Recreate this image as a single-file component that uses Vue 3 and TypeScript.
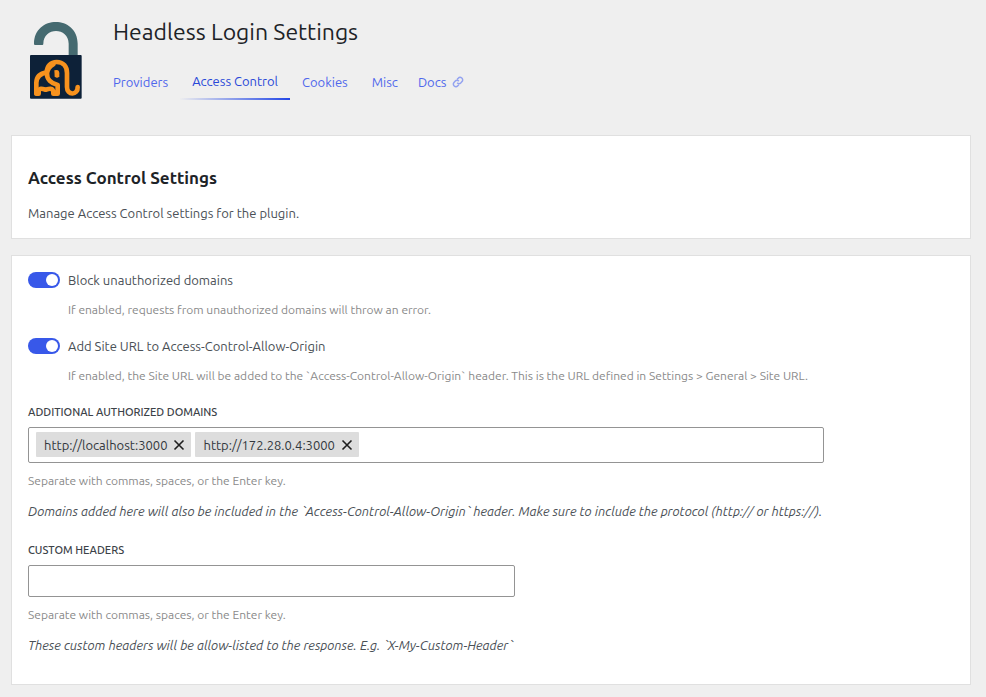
<script setup lang="ts">
import { ref } from 'vue'

interface Tab {
  id: string
  label: string
  external?: boolean
}

const tabs: Tab[] = [
  { id: 'providers', label: 'Providers' },
  { id: 'access-control', label: 'Access Control' },
  { id: 'cookies', label: 'Cookies' },
  { id: 'misc', label: 'Misc' },
  { id: 'docs', label: 'Docs', external: true },
]

const activeTab = ref('access-control')
const blockDomains = ref(true)
const addSiteUrl = ref(true)
const domains = ref<string[]>(['http://localhost:3000', 'http://172.28.0.4:3000'])
const domainDraft = ref('')
const customHeaders = ref('')

function addDomain(): void {
  const value = domainDraft.value.replace(/[\s,]+$/, '').trim()
  if (value && !domains.value.includes(value)) domains.value.push(value)
  domainDraft.value = ''
}

function removeDomain(domain: string): void {
  domains.value = domains.value.filter((d) => d !== domain)
}
</script>

<template>
  <div class="page">
    <header class="header">
      <svg class="logo" viewBox="27 30 162 240" aria-hidden="true">
        <path d="M45 105Q42 105 42 101C42 14 173 14 173 101V138H146V101C146 50 70 50 70 101Q70 105 67 105Z" fill="#456a70" />
        <rect x="30" y="135" width="155" height="131" rx="3" fill="#0d2138" />
        <g fill="none" stroke="#f7921e" stroke-width="14" stroke-linejoin="round" stroke-linecap="round">
          <path d="M49 250V218Q50 192 80 187C81 168 92 156 110 156C130 156 141 170 141 189V231C141 258 174 256 173 231" />
          <path d="M49 251H56V246C57 231 70 237 77 239C84 237 98 231 100 246V251H113V225C94 220 80 208 81 190C82 178 90 169 100 163" />
        </g>
        <path d="M103 181Q118 176 118 190V199Q111 208 104 199Z" fill="#f7921e" />
      </svg>
      <div class="heading">
        <h1>Headless Login Settings</h1>
        <nav class="tabs" aria-label="Settings sections">
          <a
            v-for="tab in tabs"
            :key="tab.id"
            :href="`#${tab.id}`"
            class="tab"
            :class="{ active: tab.id === activeTab, external: tab.external }"
            :aria-current="tab.id === activeTab ? 'page' : undefined"
            @click="activeTab = tab.id"
          >
            {{ tab.label }}
            <svg v-if="tab.external" class="link-icon" viewBox="0 0 12 12" aria-hidden="true">
              <path d="M5.2 3.2l1-1a2.5 2.5 0 0 1 3.8 3.4L8.7 7a2.4 2.4 0 0 1-3.5-.2M6.8 8.8l-1 1A2.5 2.5 0 0 1 2 6.4L3.3 5a2.4 2.4 0 0 1 3.5.2" />
            </svg>
          </a>
        </nav>
      </div>
    </header>

    <main class="content">
      <section class="card intro">
        <h2>Access Control Settings</h2>
        <p>Manage Access Control settings for the plugin.</p>
      </section>

      <form class="card fields" @submit.prevent>
        <div class="option">
          <label class="switch-row">
            <input v-model="blockDomains" class="switch" type="checkbox" role="switch" aria-describedby="block-help" />
            <span>Block unauthorized domains</span>
          </label>
          <p id="block-help" class="help">If enabled, requests from unauthorized domains will throw an error.</p>
        </div>

        <div class="option">
          <label class="switch-row">
            <input v-model="addSiteUrl" class="switch" type="checkbox" role="switch" aria-describedby="site-help" />
            <span>Add Site URL to Access-Control-Allow-Origin</span>
          </label>
          <p id="site-help" class="help">
            If enabled, the Site URL will be added to the `Access-Control-Allow-Origin` header. This is the URL defined in Settings &gt; General &gt; Site URL.
          </p>
        </div>

        <div class="token-field wide">
          <label class="field-label" for="domains">Additional authorized domains</label>
          <div class="token-box with-tokens">
            <span v-for="domain in domains" :key="domain" class="token">
              {{ domain }}
              <button type="button" :aria-label="`Remove ${domain}`" @click="removeDomain(domain)">
                <svg viewBox="0 0 12 12" aria-hidden="true"><path d="M1.5 1.5l9 9M10.5 1.5l-9 9" /></svg>
              </button>
            </span>
            <input id="domains" v-model="domainDraft" type="text" autocomplete="off" @keydown.enter.prevent="addDomain" />
          </div>
          <p class="hint">Separate with commas, spaces, or the Enter key.</p>
        </div>
        <p class="note">
          Domains added here will also be included in the `Access-Control-Allow-Origin` header. Make sure to include the protocol (http:// or https://).
        </p>

        <div class="token-field narrow">
          <label class="field-label" for="headers">Custom headers</label>
          <div class="token-box">
            <input id="headers" v-model="customHeaders" type="text" autocomplete="off" />
          </div>
          <p class="hint">Separate with commas, spaces, or the Enter key.</p>
        </div>
        <p class="note">These custom headers will be allow-listed to the response. E.g. `X-My-Custom-Header`</p>
      </form>
    </main>
  </div>
</template>

<style>
body {
  background: #efefef;
}
</style>

<style scoped>
.page {
  box-sizing: border-box;
  padding: 20px 15px 12px 11px;
  color: #4a5056;
  font-family: Ubuntu, "Noto Sans", sans-serif;
  font-size: 13px;
  line-height: 20px;
}

h1,
h2,
p {
  margin: 0;
}

.header {
  display: flex;
  gap: 30px;
  padding-left: 18px;
}

.logo {
  flex: none;
  width: 54px;
  height: 80px;
}

h1 {
  color: #1d2327;
  font-size: 23px;
  font-weight: 400;
  line-height: 24px;
}

.tabs {
  display: flex;
  align-items: flex-start;
  gap: 12px;
  margin-top: 18px;
}

.tab {
  display: flex;
  align-items: center;
  gap: 6px;
  padding: 10px 6px;
  color: #4f67ec;
  text-decoration: none;
}

.tab:first-child {
  padding-right: 0;
  padding-left: 0;
}

.tab.active {
  padding: 9px 12px 7px;
  border-bottom: 2px solid;
  border-image: linear-gradient(90deg, transparent, #2145e6) 1;
  color: #2948d8;
}

.tab.active + .tab {
  padding-left: 0;
}

.tab.external {
  padding-left: 2px;
}

.link-icon {
  width: 12px;
  height: 12px;
  fill: none;
  stroke: #93a2f0;
  stroke-width: 1.5;
}

.content {
  display: grid;
  gap: 16px;
  margin-top: 33px;
}

.card {
  border: 1px solid #e0e0e0;
  background: #fff;
}

.intro {
  padding: 32px 16px 15px;
}

h2 {
  margin-bottom: 15px;
  color: #1d2327;
  font-size: 17px;
  font-weight: 600;
}

.fields {
  padding: 14px 16px 10px;
}

.option {
  margin-bottom: 16px;
}

.switch-row {
  display: flex;
  align-items: center;
  gap: 8px;
}

.switch {
  appearance: none;
  box-sizing: border-box;
  flex: none;
  width: 32px;
  height: 16px;
  margin: 0;
  padding: 2px;
  border-radius: 8px;
  background: #8c8f94;
}

.switch::before {
  content: "";
  display: block;
  width: 12px;
  height: 12px;
  border-radius: 50%;
  background: #fff;
}

.switch:checked {
  background: #3858e9;
}

.switch:checked::before {
  margin-left: auto;
}

.help,
.hint {
  color: #8a8a8a;
  font-size: 12px;
}

.help {
  margin: 10px 0 0 40px;
}

.field-label {
  display: block;
  margin-bottom: 5px;
  color: #3c4248;
  font-size: 11px;
  font-weight: 500;
  text-transform: uppercase;
}

.token-box {
  box-sizing: border-box;
  display: flex;
  flex-wrap: wrap;
  gap: 4px;
  min-height: 32px;
  padding: 3px 7px;
  border: 1px solid #949494;
  border-radius: 2px;
}

.with-tokens {
  min-height: 36px;
  padding: 4px 7px;
}

.token-box input {
  flex: 1;
  min-width: 48px;
  padding: 0;
  border: 0;
  outline: 0;
  background: none;
  color: inherit;
  font: inherit;
}

.token {
  display: flex;
  align-items: center;
  gap: 6px;
  height: 25px;
  padding: 0 6px 0 8px;
  border-radius: 1px;
  background: #ddd;
  color: #32373c;
}

.token button {
  display: grid;
  place-items: center;
  width: 12px;
  height: 20px;
  padding: 0;
  border: 0;
  background: none;
  cursor: pointer;
}

.token svg {
  width: 12px;
  height: 12px;
  fill: none;
  stroke: #1e1e1e;
  stroke-width: 1.6;
}

.wide {
  max-width: 796px;
}

.narrow {
  max-width: 487px;
}

.hint {
  margin-top: 8px;
}

.note {
  margin: 10px 0 19px;
  font-style: italic;
}
</style>
